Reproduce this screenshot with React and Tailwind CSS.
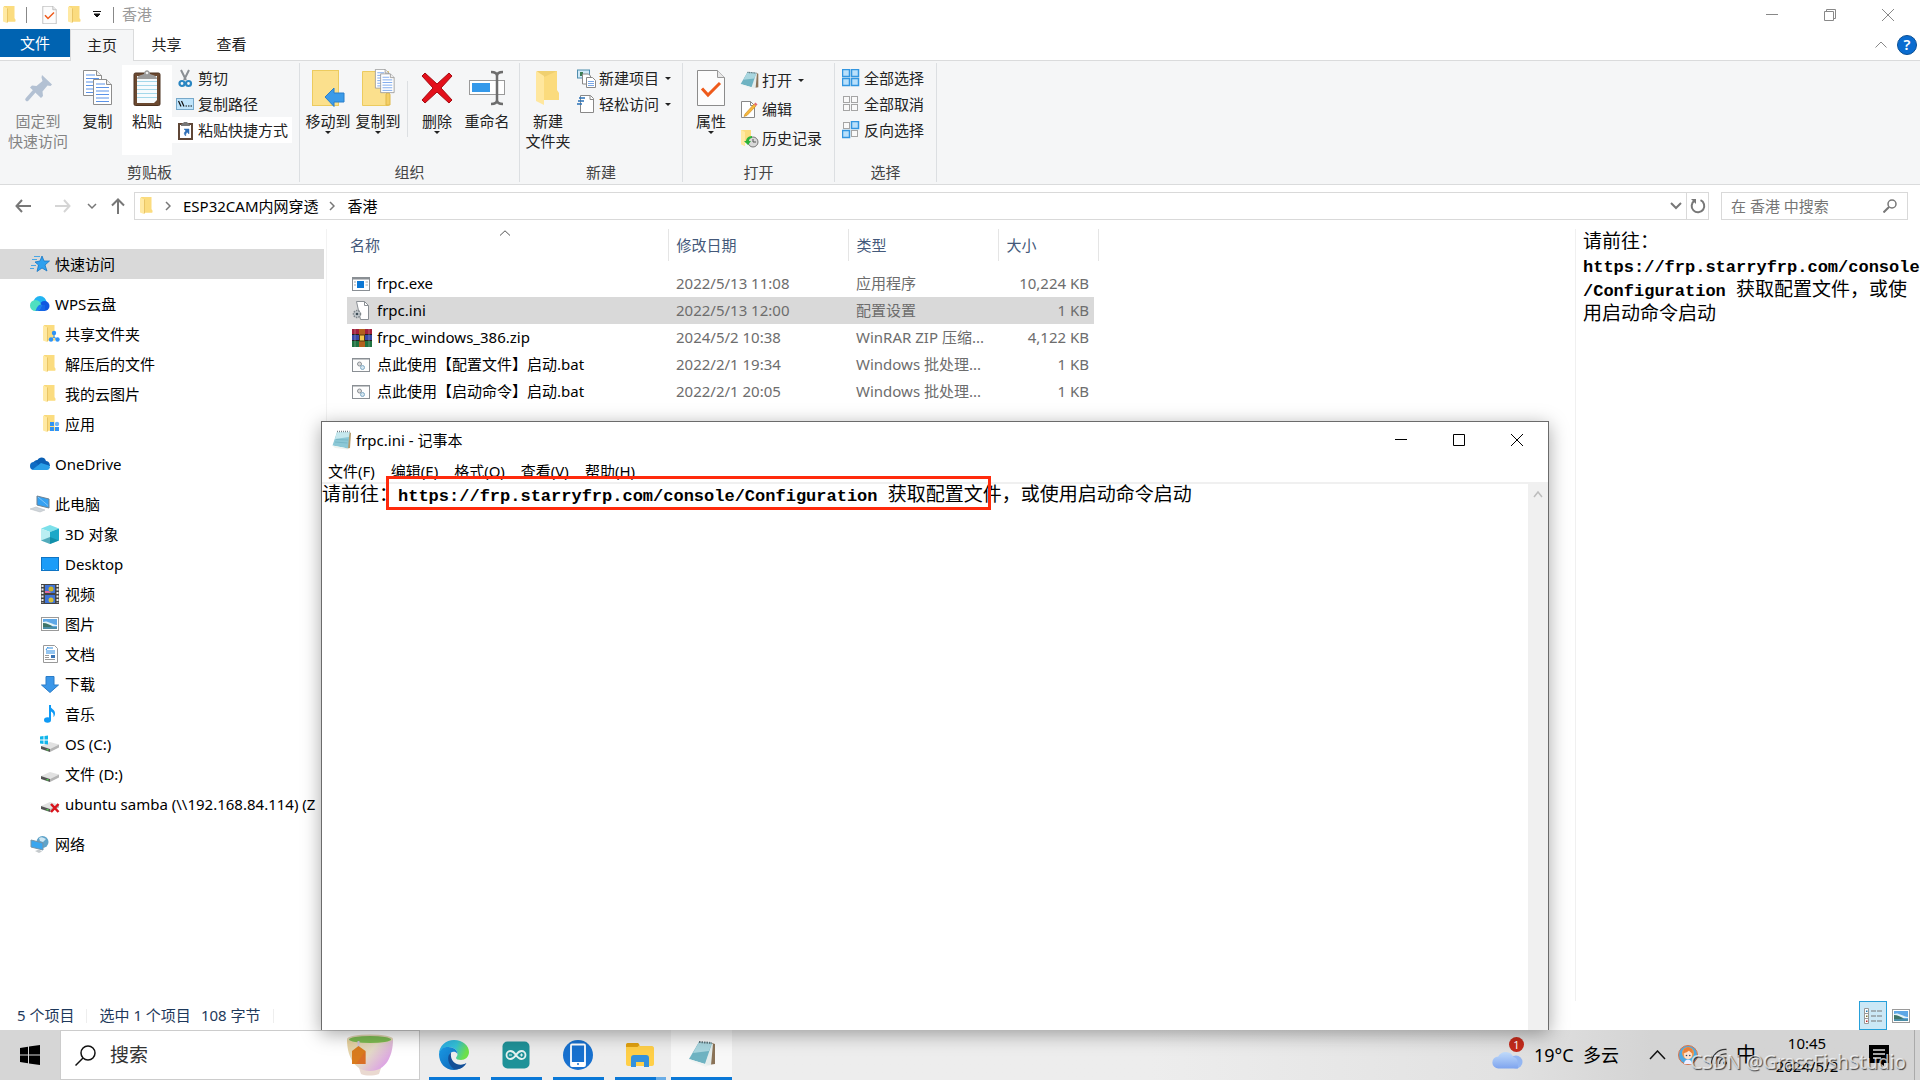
import React from "react";

/* ---------- icons ---------- */

function Svg({ w, h, vb, children, className = "" }) {
  return (
    <svg width={w} height={h} viewBox={vb || `0 0 ${w} ${h}`} className={`shrink-0 ${className}`} fill="none" aria-hidden="true">
      {children}
    </svg>
  );
}

const FolderShape = () => (
  <>
    <path d="M1 0h10v12l1 1.500v2H4z" fill="#f9d978" />
    <path d="M4 0h7.500v12.500l1 1v2H4.500z" fill="#fbdc7f" />
    <path d="M0 0.500L4 2v15L0 15.500z" fill="#ffe9a3" />
    <path d="M4 2v15l1-1V3z" fill="#e9c566" />
  </>
);
const Folder = () => (
  <Svg w={13} h={18}><FolderShape /></Svg>
);
const FolderNav = ({ badge }) => (
  <Svg w={20} h={20}>
    <g transform="translate(3 1)"><FolderShape /></g>
    {badge === "share" && (
      <g fill="#2f93f5"><circle cx="14" cy="9" r="2.200" /><circle cx="11" cy="15.500" r="2.200" /><circle cx="17.500" cy="15.500" r="2.200" /><path d="M14 9v4M14 13l-3 2.500M14 13l3.500 2.500" stroke="#2f93f5" /></g>
    )}
    {badge === "apps" && (
      <g fill="#2f93f5"><rect x="10" y="8" width="4" height="4" /><circle cx="17" cy="10" r="2.200" fill="#6fb6f8" /><rect x="10" y="13" width="4" height="4" /><rect x="15" y="13" width="4" height="4" /></g>
    )}
  </Svg>
);
const CheckDoc = ({ w, h }) => (
  <Svg w={w} h={h} vb="0 0 28 36">
    <path d="M.5.5h20l7 7v28H.5z" fill="#fcfcfc" stroke="#8c8c8c" />
    <path d="M20.500.5v7h7" fill="#e8e8e8" stroke="#9a9a9a" />
    <path d="M5 18.500l6 6.500L23 13" stroke="#ee5a1b" strokeWidth="3" />
  </Svg>
);
const Caret = () => (
  <Svg w={6} h={3}><path d="M0 0h6L3 3z" fill="#222" /></Svg>
);
const Pin = () => (
  <Svg w={36} h={36}>
    <path d="M22 5l10 9.500-1.500 1.500-3-.5-5 6 .5 4.500-2 2-11-10.500 2-2 4.500.5 6-5-1-3.500z" fill="#b3c1d3" />
    <path d="M14 21.500L7 29.500" stroke="#b3c1d3" strokeWidth="3.500" strokeLinecap="round" />
  </Svg>
);
const Page = ({ x, y }) => (
  <g transform={`translate(${x} ${y})`}>
    <path d="M.5.5h13l5 5v20H.5z" fill="#fff" stroke="#8d8d8d" />
    <path d="M13.500.5v5h5" fill="#eee" stroke="#8d8d8d" />
    <path d="M3 5h9M3 8.500h13M3 12h13M3 15.500h13M3 19h13M3 22.500h13" stroke="#5b93e8" />
  </g>
);
const Copy = () => (
  <Svg w={32} h={36}><Page x={1} y={0} /><Page x={11} y={9} /></Svg>
);
const Paste = () => (
  <Svg w={28} h={36}>
    <rect x="1" y="3" width="26" height="32.500" rx="1.500" fill="#6b4930" stroke="#4d3220" />
    <path d="M4 6h20v24l-3 3H4z" fill="#f7fbfd" />
    <path d="M4 11.500h20M4 15.500h20M4 19.500h20M4 23.500h20M4 27.500h20" stroke="#a4d8ea" />
    <path d="M4 9c0-4 5-4 7-5 0-5 6-5 6 0 2 1 7 1 7 5z" fill="#9b9b9b" /><circle cx="14" cy="3" r="1.300" fill="#eee" />
  </Svg>
);
const Cut = () => (
  <Svg w={18} h={19}>
    <path d="M5 1l5 10M13 1L8 11" stroke="#8a8f94" strokeWidth="2" />
    <circle cx="6" cy="14.500" r="2.500" stroke="#2a86c2" strokeWidth="2.200" /><circle cx="12.500" cy="14.500" r="2.500" stroke="#2a86c2" strokeWidth="2.200" />
  </Svg>
);
const CopyPath = () => (
  <Svg w={18} h={12}>
    <rect x=".5" y=".5" width="17" height="11" fill="#bfe4fb" stroke="#77a8c9" />
    <path d="M2.500 3l2.500 5.500M5.500 3L8 8.500M9.500 8h1.500M12 8h1.500M14.500 8H16" stroke="#111" strokeWidth="1.200" />
  </Svg>
);
const PasteLink = () => (
  <Svg w={18} h={19}>
    <rect x="3" y="3" width="13" height="15" fill="#fff" stroke="#5f4636" strokeWidth="2" />
    <path d="M5 5c0-3 2-2 3-4h3c1 2 3 1 3 4z" fill="#777" />
    <path d="M8 8h5v5l-1.700-1.700c-1.600 1-1.600 2-1.600 3.700-2.200-2-1.500-4.200.300-5z" fill="#2d6db5" stroke="#2d6db5" strokeWidth=".5" />
  </Svg>
);
const MoveTo = () => (
  <Svg w={34} h={38}>
    <rect x="1.500" y="1.500" width="26" height="35" fill="#fbe08d" stroke="#eccb5f" />
    <path d="M14 28l9-9v5h10v9H23v4.500z" fill="#3b9be9" stroke="#2b7fca" />
  </Svg>
);
const CopyTo = () => (
  <Svg w={34} h={38}>
    <path d="M1.500 2.500h26v34h-26z" fill="#fbe08d" stroke="#eccb5f" />
    <path d="M25 36V26c0-3 4-3 4 0v10z" fill="#f4cf67" stroke="#dfb84a" />
    <g transform="translate(14 0) scale(.75)"><Page x={0} y={0} /><Page x={7} y={6} /></g>
  </Svg>
);
const Delete = () => (
  <Svg w={32} h={34}>
    <path d="M4 2L16 13 28 2l3 3L20 17l11 12-3 3L16 21 4 32l-3-3L12 17 1 5z" fill="#e3101b" stroke="#a50c12" />
  </Svg>
);
const Rename = () => (
  <Svg w={36} h={36}>
    <rect x=".5" y="10.500" width="35" height="14" fill="#fff" stroke="#9a9a9a" />
    <rect x="3" y="13" width="18" height="9" fill="#3499ea" />
    <path d="M22 2c4 0 6 1 6 4v24c0 3-2 4-6 4M34 2c-4 0-6 1-6 4v24c0 3 2 4 6 4" stroke="#6d6d6d" strokeWidth="2.500" />
  </Svg>
);
const NewFolder = () => (
  <Svg w={26} h={36}>
    <path d="M2 1h20v19l2 3v7H8z" fill="#fbdb7d" /><path d="M2 1h20L9 7z" fill="#e9c868" opacity=".6" />
    <path d="M1 1l8 5v29l-8-4z" fill="#ffe79e" />
  </Svg>
);
const NewItem = () => (
  <Svg w={19} h={19}>
    <rect x=".5" y="1" width="12" height="8" fill="#cfe9f7" stroke="#4f8dae" /><rect x="3" y="3" width="3" height="4" fill="#3c7d56" />
    <path d="M5.500 5h6l2 2v8h-8z" fill="#fff" stroke="#888" />
    <path d="M9.500 8.500h6l3 3v7h-9z" fill="#fff" stroke="#888" /><path d="M11 12.500h6M11 14.500h6M11 16.500h6" stroke="#79a7e6" />
  </Svg>
);
const EasyAccess = () => (
  <Svg w={19} h={20}>
    <path d="M3.500 1.500h10l3 3v14h-13z" fill="#fff" stroke="#888" /><path d="M13 1.500v4h4" stroke="#888" />
    <path d="M2 4h6M1 7h6M0 10h5" stroke="#2a71b8" strokeWidth="1.500" />
  </Svg>
);
const NotepadIcon = ({ size = 20 }) => (
  <Svg w={size} h={size} vb="0 0 20 20">
    <path d="M17 2l2 1-1 15-5 1z" fill="#b59a6b" />
    <path d="M5 2h12.500l-1.500 16.500L.5 15.500z" fill="#8cc8d6" />
    <path d="M5 2h12.500l-.6 5L3 9z" fill="#c6e8ee" />
    <path d="M.5 15.500L16 18.500l-.3 1L3 18z" fill="#eef3f0" />
    <path d="M5 1.500h12.500" stroke="#75838a" strokeWidth="1.500" strokeDasharray="1 1" />
    <path d="M4 9.500l12 .5M3 12l12.500 1" stroke="#6fb0c0" opacity=".7" />
  </Svg>
);
const NotepadTilt = ({ size = 19 }) => (
  <Svg w={size} h={size} vb="0 0 28 28">
    <path d="M24 3l3 1v20l-7 1z" fill="#8b7357" />
    <path d="M23 3l2 1-2 21-6 1z" fill="#e4eceb" />
    <path d="M11 2l13 1-7 21L1 19z" fill="#6fb3c2" />
    <path d="M11 2l13 1-3 8L5 13z" fill="#a9d6df" />
    <path d="M1 19l16 5 3 1-2 2L3 21z" fill="#eff3f2" />
    <path d="M11 2l13 1" stroke="#60757b" strokeWidth="2" strokeDasharray="1.500 1" />
  </Svg>
);
const EditIcon = () => (
  <Svg w={18} h={19}>
    <path d="M1.500 1.500h9l4 4v12h-13z" fill="#fff" stroke="#888" /><path d="M10.500 1.500v4h4" stroke="#888" />
    <path d="M5 14L14 4l2 2-9 9.500-3 1z" fill="#f6b73c" stroke="#c98a1e" strokeWidth=".6" /><path d="M14 4l1.500-1.500 2 2L16 6z" fill="#e36a72" />
  </Svg>
);
const History = () => (
  <Svg w={19} h={19}>
    <path d="M1 1h10v13H5v3l-4-2z" fill="#fbdc7f" /><path d="M1 1l4 2v14l-4-2z" fill="#ffe9a3" />
    <circle cx="13" cy="13" r="5" fill="#d8d8d8" stroke="#777" /><path d="M13 10v3h3" stroke="#555" />
    <path d="M12 7c-4 0-6 3-6 5H4l4 4 3-4H9c0-2 1-3 3-3z" fill="#2bb23a" />
  </Svg>
);
const SelBox = ({ x, y, on }) => (
  <rect x={x + 0.5} y={y + 0.5} width={on ? 7 : 6} height={on ? 7 : 6} fill={on ? "#b9e0fb" : "#f9f9f9"} stroke={on ? "#3396e0" : "#a5a5a5"} strokeWidth={on ? 1.5 : 1} />
);
const SelectIcon = ({ on }) => (
  <Svg w={18} h={18}>
    <SelBox x={on[0] ? 0 : 1} y={on[0] ? 0 : 1} on={on[0]} /><SelBox x={9} y={on[1] ? 0 : 1} on={on[1]} /><SelBox x={on[2] ? 0 : 1} y={9} on={on[2]} /><SelBox x={9} y={9} on={on[3]} />
  </Svg>
);
const Star = () => (
  <Svg w={20} h={18}>
    <path d="M12 1l2 5h5.500L15 10l2 6-5-3-5 3.500L8.500 10 5 7l5-1z" fill="#2ea0ee" stroke="#1876c4" strokeWidth=".8" />
    <path d="M4 1.500h6M2 4.500h5M1 10.500h5M0 13.500h4" stroke="#4aa6e4" />
  </Svg>
);
const WpsCloud = () => (
  <Svg w={20} h={16}>
    <circle cx="10" cy="6.500" r="6.500" fill="#22b4f2" /><circle cx="14.500" cy="10" r="5" fill="#1158e0" /><rect x="6" y="9" width="9" height="6" fill="#1566e6" />
    <circle cx="5.500" cy="9.500" r="5.500" fill="#4fe0c0" /><path d="M5.500 15c4 0 5.500-3 7-6-3-1-5 0-7 6z" fill="#1c80ee" />
  </Svg>
);
const OneDrive = () => (
  <Svg w={20} h={14}>
    <path d="M3 7c0-3 3-4 4.500-4C9-.5 15-.5 16 4c3 0 4 3 4 5l-8 3z" fill="#0a5fb4" />
    <circle cx="4" cy="9" r="4" fill="#0f6cc4" /><path d="M2 13L11 6l8 2.500c2 2 0 4.500-2 4.500z" fill="#2a9fe8" />
  </Svg>
);
const Pc = () => (
  <Svg w={20} h={18}>
    <path d="M7 1l12 3v9L7 10z" fill="#35a1f2" stroke="#6e8191" /><path d="M8 2l10 8.500" stroke="#7fc4f8" />
    <path d="M0 14l6-2 9 3-5 2z" fill="#cfd5da" stroke="#b2b9be" strokeWidth=".5" />
  </Svg>
);
const Cube = () => (
  <Svg w={20} h={19}>
    <path d="M10 0l9 3.500-9 3.500-9-3.500z" fill="#7ce0ea" /><path d="M1 3.500L10 7v12l-9-3.500z" fill="#b9eef2" /><path d="M19 3.500L10 7v12l9-3.500z" fill="#1ba8c8" />
    <path d="M1 15.500l9-3.500 9 3.500-9 3.500z" fill="#0b7f96" opacity=".6" />
  </Svg>
);
const DesktopIcon = () => (
  <Svg w={20} h={14}><rect x="1.500" y=".5" width="17" height="13" fill="#1b9cf8" stroke="#0f74c4" /><path d="M3 12.500h14" stroke="#bfe2fb" strokeDasharray="1 12 1 1 1 1" /></Svg>
);
const Video = () => (
  <Svg w={20} h={20}>
    <rect x="1" y="0" width="18" height="20" fill="#444" /><path d="M2.500 1v18M17.500 1v18" stroke="#eee" strokeWidth="2" strokeDasharray="2 1.500" />
    <rect x="5" y="1" width="10" height="8" fill="#3f74d8" /><rect x="5" y="11" width="10" height="8" fill="#3f74d8" />
    <circle cx="11" cy="5" r="2.500" fill="#c9b22b" /><path d="M5 7h4l2 2H5z" fill="#e06aa0" /><circle cx="11" cy="16" r="2.500" fill="#d6bf38" />
  </Svg>
);
const Picture = () => (
  <Svg w={20} h={14}>
    <rect x="1.500" y=".5" width="17" height="13" fill="#fff" stroke="#9a9a9a" /><rect x="3" y="2" width="14" height="10" fill="#5ea7e6" />
    <path d="M3 5c4-2 8 2 14 3v1H3z" fill="#e3f2f8" /><path d="M3 6c4 0 7 2 10 3.500L3 11z" fill="#3e7469" /><path d="M3 10h14v2H3z" fill="#4b8ea8" />
  </Svg>
);
const DocIcon = () => (
  <Svg w={20} h={18}>
    <path d="M3.500.5h11l3 3v14h-14z" fill="#fff" stroke="#999" />
    <path d="M6 5l2-3M8 3h5M6 6h9M6 8h9" stroke="#2a8be0" /><path d="M5 10.500h4M5 12.500h4M5 14.500h10" stroke="#999" /><rect x="11" y="10" width="4" height="3" fill="#3b74b4" />
  </Svg>
);
const Download = () => (
  <Svg w={20} h={17}><path d="M6 .5h8V9h4.500L10 16.500 1.500 9H6z" fill="#3a96e8" stroke="#2a7cc8" /></Svg>
);
const Music = () => (
  <Svg w={20} h={18}><path d="M10 0v15" stroke="#0f9af5" strokeWidth="2" /><ellipse cx="7.500" cy="15" rx="3.500" ry="2.700" fill="#0f9af5" /><path d="M10 0c0 4 5.500 4 5 9-.2 1.500-1 3-1.500 3C14 9 13 7 10 6z" fill="#0f9af5" /></Svg>
);
const Drive = ({ badge }) => (
  <Svg w={20} h={18}>
    <path d="M1 11l9-4 9 2.500-9 4.500z" fill="#e2e2e2" /><path d="M1 11l9 3v3L1 14z" fill="#555" /><path d="M10 14l9-4.500v3L10 17z" fill="#b5b5b5" /><rect x="6.500" y="14" width="2" height="1.500" fill="#4ecb47" />
    {badge === "win" && <path d="M0 1.500l3.500-.5v3.500H0zM4.500 1L8 .5v4H4.500zM0 5.500h3.500V9L0 8.500zM4.500 5.500H8v4L4.500 9z" fill="#12b5ea" />}
    {badge === "off" && <path d="M11 9l7.500 8M18.500 9L11 17" stroke="#d9141c" strokeWidth="2.500" />}
  </Svg>
);
const NetworkIcon = () => (
  <Svg w={20} h={18}>
    <circle cx="12.500" cy="7" r="6" fill="#5fa3c9" /><path d="M9 3c3-2 5 0 7 1l-3 3-3-1z" fill="#cfe7f3" />
    <path d="M1 5l12 3v7L1 12z" fill="#3aa6ef" stroke="#7693a6" /><path d="M5 16l4-1.500 3 2-3 1.500z" fill="#c4c9cc" />
  </Svg>
);
const ExeIcon = () => (
  <Svg w={18} h={14}><rect x=".5" y=".5" width="17" height="13" fill="#fff" stroke="#8a8f94" /><path d="M0 1.500h18" stroke="#8a8f94" strokeWidth="2" /><rect x="5" y="4" width="7" height="7" fill="#0d78d4" /><path d="M2 5h2M2 8h2M13.500 5H16M13.500 8H16" stroke="#aaa" /></Svg>
);
const IniIcon = () => (
  <Svg w={18} h={19}><path d="M4.500.5h8l4 4v14h-8z" fill="#fff" stroke="#8a8f94" /><path d="M12.500.5v4h4" stroke="#8a8f94" /><circle cx="5" cy="13" r="3.500" fill="#c3c9cd" stroke="#7f868b" strokeDasharray="1.500 1" strokeWidth="1.500" /><circle cx="5" cy="13" r="1.300" fill="#3e4d57" /></Svg>
);
const ZipIcon = () => (
  <Svg w={20} h={18}>
    <rect width="20" height="6" fill="#a3203c" /><rect y="6" width="20" height="6" fill="#3948a8" /><rect y="12" width="20" height="6" fill="#1f7340" />
    <path d="M0 5.500h20M0 11.500h20" stroke="#222" /><rect x="7" width="6" height="18" fill="#b4611e" /><rect x="7.500" y="6" width="5" height="6" fill="#f2c94c" stroke="#5a3a10" /><path d="M3 0v18M17 0v18" stroke="#ddd" opacity=".35" />
  </Svg>
);
const BatIcon = () => (
  <Svg w={18} h={14}><rect x=".5" y=".5" width="17" height="13" fill="#fdfdfd" stroke="#8a8f94" /><path d="M0 1h18" stroke="#8a8f94" /><circle cx="7.500" cy="6" r="2" fill="#ddd" stroke="#8c9297" /><circle cx="10.500" cy="9.500" r="2" fill="#d5e6f0" stroke="#7fa9c4" /></Svg>
);
const Stroke = ({ w, h, d, color = "#777", sw = 1.5 }) => (
  <Svg w={w} h={h}><path d={d} stroke={color} strokeWidth={sw} /></Svg>
);

/* ---------- ribbon ---------- */

function BigButton({ icon, lines, caret, disabled, className = "w-[50px]" }) {
  return (
    <button className={`flex h-[90px] shrink-0 flex-col items-center text-[15px] leading-5 whitespace-nowrap ${disabled ? "text-[#838383]" : "text-[#222]"} ${className}`}>
      <span className="flex h-[46px] items-center justify-center">{icon}</span>
      {lines.map((l) => <span key={l}>{l}</span>)}
      {caret && <Caret />}
    </button>
  );
}

function SmallButton({ icon, label, caret, className = "" }) {
  return (
    <button className={`flex h-[26px] items-center pl-1 text-[15px] whitespace-nowrap text-[#222] ${className}`}>
      <span className="flex w-[22px] items-center">{icon}</span>
      <span>{label}</span>
      {caret && <span className="ml-[6px]"><Caret /></span>}
    </button>
  );
}

function Group({ title, className, children }) {
  return (
    <section aria-label={title} className={`my-[2px] flex flex-col justify-between border-r border-[#dcdfe2] ${className}`}>
      <div className="flex pt-[2px] pl-[3px]">{children}</div>
      <div className="text-center text-[15px] leading-5 text-[#444]">{title}</div>
    </section>
  );
}

function Ribbon() {
  return (
    <div className="flex h-[125px] shrink-0 border-y border-[#dadbdc] bg-[#f5f6f7]">
      <Group title="剪贴板" className="w-[300px]">
        <BigButton icon={<Pin />} lines={["固定到", "快速访问"]} disabled className="w-[70px]" />
        <BigButton icon={<Copy />} lines={["复制"]} className="w-[49px]" />
        <BigButton icon={<Paste />} lines={["粘贴"]} className="w-[50px] bg-white" />
        <div className="flex w-[120px] flex-col">
          <SmallButton icon={<Cut />} label="剪切" />
          <SmallButton icon={<CopyPath />} label="复制路径" />
          <SmallButton icon={<PasteLink />} label="粘贴快捷方式" className="bg-white" />
        </div>
      </Group>
      <Group title="组织" className="w-[220px]">
        <BigButton icon={<MoveTo />} lines={["移动到"]} caret />
        <BigButton icon={<CopyTo />} lines={["复制到"]} caret />
        <div className="mx-1 mt-4 h-[56px] w-px bg-[#dcdfe2]" />
        <BigButton icon={<Delete />} lines={["删除"]} caret />
        <BigButton icon={<Rename />} lines={["重命名"]} />
      </Group>
      <Group title="新建" className="w-[163px]">
        <BigButton icon={<NewFolder />} lines={["新建", "文件夹"]} />
        <div className="flex flex-col">
          <SmallButton icon={<NewItem />} label="新建项目" caret />
          <SmallButton icon={<EasyAccess />} label="轻松访问" caret />
        </div>
      </Group>
      <Group title="打开" className="w-[152px]">
        <BigButton icon={<CheckDoc w={28} h={36} />} lines={["属性"]} caret />
        <div className="flex flex-col gap-[3px] pt-[2px]">
          <SmallButton icon={<NotepadTilt />} label="打开" caret />
          <SmallButton icon={<EditIcon />} label="编辑" />
          <SmallButton icon={<History />} label="历史记录" />
        </div>
      </Group>
      <Group title="选择" className="w-[102px]">
        <div className="flex flex-col">
          <SmallButton icon={<SelectIcon on={[1, 1, 1, 1]} />} label="全部选择" />
          <SmallButton icon={<SelectIcon on={[0, 0, 0, 0]} />} label="全部取消" />
          <SmallButton icon={<SelectIcon on={[0, 1, 1, 0]} />} label="反向选择" />
        </div>
      </Group>
    </div>
  );
}

/* ---------- explorer ---------- */

function TitleBar() {
  return (
    <header className="flex h-[29px] shrink-0 items-center pl-[3px]">
      <Folder />
      <span className="mx-[10px] h-4 w-px bg-[#888]" />
      <button aria-label="属性" className="ml-[5px]"><CheckDoc w={15} h={18} /></button>
      <button aria-label="新建文件夹" className="ml-[11px]"><Folder /></button>
      <button aria-label="自定义快速访问工具栏" className="ml-3">
        <Svg w={8} h={7}><path d="M0 .5h8M1 3h6L4 6z" stroke="#111" strokeWidth="1" fill="#111" /></Svg>
      </button>
      <span className="mx-3 h-4 w-px bg-[#888]" />
      <h1 className="-ml-1 text-[15px] text-[#999]">香港</h1>
      <div className="ml-auto flex pr-[3px]">
        <button aria-label="最小化" className="flex w-[58px] justify-center"><Stroke w={12} h={12} d="M0 5.500h12" sw={1} color="#888" /></button>
        <button aria-label="还原" className="flex w-[58px] justify-center"><Stroke w={12} h={12} d="M.5 2.500h9v9h-9zM2.500 2.500v-2h9v9h-2" sw={1} color="#888" /></button>
        <button aria-label="关闭" className="flex w-[58px] justify-center"><Stroke w={12} h={12} d="M0 0l12 12M12 0L0 12" sw={1} color="#888" /></button>
      </div>
    </header>
  );
}

function Tabs() {
  return (
    <nav className="flex h-[31px] shrink-0 text-[15px] text-[#222]">
      <button className="mb-[3px] w-[70px] bg-[#0063b1] text-white">文件</button>
      <button className="relative z-10 -mb-px w-16 border border-b-0 border-[#dadbdc] bg-[#f5f6f7]">主页</button>
      <button className="w-[65px]">共享</button>
      <button className="w-[65px]">查看</button>
      <div className="ml-auto flex items-center gap-[10px] pr-[3px]">
        <button aria-label="最小化功能区"><Stroke w={12} h={7} d="M.5 6.500L6 1l5.500 5.500" sw={1} color="#888" /></button>
        <button aria-label="帮助" className="flex size-5 items-center justify-center rounded-full border border-[#0a4f94] bg-[#0a6cd0] text-[15px] leading-none font-semibold text-white">?</button>
      </div>
    </nav>
  );
}

function AddressBar() {
  return (
    <div className="mt-[7px] flex h-7 shrink-0 items-center pr-3">
      <button aria-label="后退" className="ml-[15px]"><Stroke w={16} h={14} d="M7 1L1.500 7 7 13M1.500 7H16" sw={2} /></button>
      <button aria-label="前进" className="ml-6"><Stroke w={16} h={14} d="M9 1l5.500 6L9 13M14.500 7H0" color="#d5d5d5" sw={2} /></button>
      <button aria-label="最近浏览的位置" className="ml-4"><Stroke w={10} h={7} d="M1 1l4 4 4-4" /></button>
      <button aria-label="上移" className="ml-[14px]"><Stroke w={14} h={16} d="M1 7.500L7 1.500l6 6M7 1.500V16" sw={2} /></button>
      <div className="ml-[9px] flex h-full flex-1 items-center border border-[#d9d9d9] pl-[5px] text-[15px] text-black">
        <Folder />
        <span className="mx-3"><Stroke w={6} h={10} d="M1 1l4 4-4 4" /></span>
        <a href="#parent">ESP32CAM内网穿透</a>
        <span className="mr-3 ml-[11px]"><Stroke w={6} h={10} d="M1 1l4 4-4 4" /></span>
        <a href="#here">香港</a>
        <button aria-label="以前的位置" className="mr-1 ml-auto"><Stroke w={12} h={8} d="M1 1l5 5 5-5" sw={2} /></button>
        <button aria-label="刷新" className="flex h-full w-[22px] items-center justify-center border-l border-[#d9d9d9]">
          <Svg w={16} h={16}><path d="M10.500 2.200A6.300 6.300 0 1 1 4.500 2.700" stroke="#777" strokeWidth="2" /><path d="M1 1h5v5z" fill="#777" /></Svg>
        </button>
      </div>
      <label className="ml-3 flex h-full w-[187px] items-center border border-[#d9d9d9] pr-[10px] pl-[9px]">
        <input aria-label="搜索" placeholder="在 香港 中搜索" className="min-w-0 flex-1 text-[15px] outline-none placeholder:text-[#757575]" />
        <Svg w={14} h={14}><circle cx="9" cy="5" r="4" stroke="#777" strokeWidth="1.500" /><path d="M6 8L.5 13.500" stroke="#777" strokeWidth="2" /></Svg>
      </label>
    </div>
  );
}

const navGroups = [
  [{ icon: <Star />, label: "快速访问", root: true, active: true }],
  [
    { icon: <WpsCloud />, label: "WPS云盘", root: true },
    { icon: <FolderNav badge="share" />, label: "共享文件夹" },
    { icon: <FolderNav />, label: "解压后的文件" },
    { icon: <FolderNav />, label: "我的云图片" },
    { icon: <FolderNav badge="apps" />, label: "应用" },
  ],
  [{ icon: <OneDrive />, label: "OneDrive", root: true }],
  [
    { icon: <Pc />, label: "此电脑", root: true },
    { icon: <Cube />, label: "3D 对象" },
    { icon: <DesktopIcon />, label: "Desktop" },
    { icon: <Video />, label: "视频" },
    { icon: <Picture />, label: "图片" },
    { icon: <DocIcon />, label: "文档" },
    { icon: <Download />, label: "下载" },
    { icon: <Music />, label: "音乐" },
    { icon: <Drive badge="win" />, label: "OS (C:)" },
    { icon: <Drive />, label: "文件 (D:)" },
    { icon: <Drive badge="off" />, label: "ubuntu samba (\\\\192.168.84.114) (Z" },
  ],
  [{ icon: <NetworkIcon />, label: "网络", root: true }],
];

function NavPane() {
  return (
    <aside className="flex w-[327px] shrink-0 flex-col gap-[10px] overflow-hidden border-r border-[#f2f2f2] pt-5 pr-[2px]">
      {navGroups.map((g, i) => (
        <ul key={i}>
          {g.map((n) => (
            <li key={n.label}>
              <a href="#nav" className={`flex h-[30px] items-center gap-[5px] text-[15px] whitespace-nowrap text-black ${n.root ? "pl-[30px]" : "pl-10"} ${n.active ? "bg-[#d9d9d9]" : ""}`}>
                {n.icon}
                <span>{n.label}</span>
              </a>
            </li>
          ))}
        </ul>
      ))}
    </aside>
  );
}

const files = [
  [<ExeIcon />, "frpc.exe", "2022/5/13 11:08", "应用程序", "10,224 KB"],
  [<IniIcon />, "frpc.ini", "2022/5/13 12:00", "配置设置", "1 KB"],
  [<ZipIcon />, "frpc_windows_386.zip", "2024/5/2 10:38", "WinRAR ZIP 压缩...", "4,122 KB"],
  [<BatIcon />, "点此使用【配置文件】启动.bat", "2022/2/1 19:34", "Windows 批处理...", "1 KB"],
  [<BatIcon />, "点此使用【启动命令】启动.bat", "2022/2/1 20:05", "Windows 批处理...", "1 KB"],
];

function FileList() {
  return (
    <div className="min-w-0 flex-1 overflow-hidden pl-5">
      <table className="w-[752px] table-fixed border-collapse text-[15px] whitespace-nowrap">
        <colgroup>
          <col className="w-[321px]" /><col className="w-[180px]" /><col className="w-[150px]" /><col className="w-[96px]" /><col />
        </colgroup>
        <thead>
          <tr className="h-8 text-left text-[#44597a]">
            <th className="relative border-r border-[#e5e5e5] pl-[3px] font-normal">
              名称
              <span className="absolute top-[1px] left-[152px]"><Stroke w={12} h={6} d="M1 5.500L6 .8l5 4.700" sw={1} color="#555" /></span>
            </th>
            <th className="border-r border-[#e5e5e5] pl-2 font-normal">修改日期</th>
            <th className="border-r border-[#e5e5e5] pl-2 font-normal">类型</th>
            <th className="pl-2 font-normal">大小</th>
            <th aria-hidden="true" className="border-r border-[#e5e5e5]" />
          </tr>
        </thead>
        <tbody>
          <tr className="h-[9px]"><td colSpan={5} /></tr>
          {files.map(([icon, name, date, type, size], i) => (
            <tr key={name} className={`h-[27px] text-[#6d6d6d] ${i === 1 ? "[&>td:not(:last-child)]:bg-[#d9d9d9]" : ""}`}>
              <td className="pl-[5px] text-black">
                <span className="flex items-center"><span className="flex w-[25px]">{icon}</span>{name}</span>
              </td>
              <td className="pl-2">{date}</td>
              <td className="pl-2">{type}</td>
              <td className="pr-[5px] text-right">{size}</td>
              <td />
            </tr>
          ))}
        </tbody>
      </table>
    </div>
  );
}

const Latin = ({ children }) => (
  <span className="font-['Liberation_Mono',monospace] text-[17px] leading-none font-bold">{children}</span>
);

function Preview() {
  return (
    <section aria-label="预览" className="w-[345px] shrink-0 border-l border-[#f0f0f0] pl-[7px] text-[19px] leading-6 break-all text-black">
      <p>请前往：</p>
      <p><Latin>https://frp.starryfrp.com/console</Latin></p>
      <p><Latin>/Configuration </Latin>获取配置文件，或使用启动命令启动</p>
    </section>
  );
}

function StatusBar() {
  return (
    <footer className="flex h-[29px] shrink-0 items-center pl-[17px] text-[15px] whitespace-nowrap text-[#1e395b]">
      <span>5 个项目</span>
      <span className="mx-3 h-[14px] w-px bg-[#eee]" />
      <span>选中 1 个项目</span>
      <span className="ml-[10px]">108 字节</span>
      <span className="mx-3 h-[14px] w-px bg-[#eee]" />
      <div className="ml-auto flex items-center gap-1 pr-[9px]">
        <button aria-label="详细信息" className="flex h-[29px] w-7 items-center justify-center border border-[#26a0da] bg-[#cbe8f6]">
          <Svg w={18} h={16}><path d="M.5.5h4v15h-4zM.5 5.500h4M.5 10.500h4" fill="#fff" stroke="#999" /><path d="M7 3h5M13 3h5M7 8h5M13 8h5M7 13h5M13 13h5" stroke="#777" /><rect x="2" y="2.500" width="1.500" height="1.500" fill="#27a" /><rect x="2" y="7.500" width="1.500" height="1.500" fill="#773" /><rect x="2" y="12.500" width="1.500" height="1.500" fill="#b22" /></Svg>
        </button>
        <button aria-label="大缩略图"><Picture /></button>
      </div>
    </footer>
  );
}

/* ---------- notepad ---------- */

function Notepad() {
  return (
    <div role="dialog" aria-label="frpc.ini - 记事本" className="absolute top-[421px] right-[371px] bottom-[50px] left-[321px] z-20 flex flex-col border border-b-0 border-[#6b6b6b] bg-white shadow-[0_4px_18px_rgba(0,0,0,0.35)]">
      <div className="flex h-9 shrink-0 items-center pl-[10px]">
        <NotepadIcon />
        <span className="ml-1 text-[15px] text-black">frpc.ini - 记事本</span>
        <div className="ml-auto flex pr-[2px]">
          <button aria-label="最小化" className="flex w-[58px] justify-center"><Stroke w={12} h={12} d="M0 5.500h12" sw={1} color="#000" /></button>
          <button aria-label="最大化" className="flex w-[58px] justify-center"><Stroke w={12} h={12} d="M.5.5h11v11H.5z" sw={1} color="#000" /></button>
          <button aria-label="关闭" className="flex w-[58px] justify-center"><Stroke w={12} h={12} d="M0 0l12 12M12 0L0 12" sw={1} color="#000" /></button>
        </div>
      </div>
      <div className="flex h-[26px] shrink-0 gap-4 border-b-2 border-[#f0f0f0] pt-[2px] pl-[6px] text-[15px] text-black">
        {["文件(F)", "编辑(E)", "格式(O)", "查看(V)", "帮助(H)"].map((m) => <button key={m}>{m}</button>)}
      </div>
      <div className="flex min-h-0 flex-1">
        <div role="textbox" aria-label="文本编辑器" aria-multiline="true" contentEditable suppressContentEditableWarning className="flex-1 text-[19px] leading-5 whitespace-nowrap text-black outline-none">
          请前往：<Latin>https://frp.starryfrp.com/console/Configuration </Latin>获取配置文件，或使用启动命令启动
        </div>
        <div className="flex w-5 justify-center bg-[#f0f0f0] pt-[6px]">
          <Stroke w={10} h={8} d="M1 7l4-5 4 5" color="#bdbdbd" />
        </div>
      </div>
      <div className="pointer-events-none absolute top-[54px] left-16 h-[34px] w-[605px] border-[3px] border-[#ff2a0c]" />
    </div>
  );
}

/* ---------- taskbar ---------- */

const Edge = () => (
  <Svg w={30} h={30}>
    <defs>
      <linearGradient id="edgeTop" x1="0" y1="0" x2="1" y2=".3"><stop offset="0" stopColor="#28a8e8" /><stop offset=".6" stopColor="#35c3d8" /><stop offset="1" stopColor="#6ee04a" /></linearGradient>
      <linearGradient id="edgeMid" x1="0" y1="0" x2="1" y2="1"><stop offset="0" stopColor="#1a9be6" /><stop offset="1" stopColor="#0d5cae" /></linearGradient>
    </defs>
    <path d="M0 14C0 6 7 0 15 0c9 0 15 6 15 12 0 5-4 8-8 8-3 0-5-1-5-2 0-1 1.500-1.500 1.500-4 0-4-4-7-9-7C5 7 2 9 0 14z" fill="url(#edgeTop)" />
    <path d="M0 14c1-5 5-7.500 9.500-7 5 0 9 3 9 7-1-2-3-2.500-4.500-2.300C8 12.500 9 22 18 25c3 1 7 0 9-2-2 4-7 7-12 7C6 30 0 23 0 14z" fill="url(#edgeMid)" />
    <path d="M12 12.500C7 16 9 25 15 29c6 1 10-2 12.500-6-6 4-17 1-15.500-10.500z" fill="#134f97" />
  </Svg>
);
const Arduino = () => (
  <Svg w={28} h={28}>
    <rect x=".5" y=".5" width="27" height="27" rx="5" fill="#1f9298" />
    <path d="M14 14c-2-3-3.500-4-5.500-4a4 4 0 0 0 0 8c2 0 3.500-1 5.500-4s3.500-4 5.500-4a4 4 0 0 1 0 8c-2 0-3.500-1-5.500-4z" stroke="#e5f2f0" strokeWidth="1.800" />
    <path d="M7 14h3M18 14h3M19.500 12.500v3" stroke="#e5f2f0" strokeWidth="1" />
  </Svg>
);
const Phone = () => (
  <Svg w={30} h={30}><circle cx="15" cy="15" r="15" fill="#1871cf" /><rect x="8" y="4.500" width="14" height="21.500" rx="1" fill="#1871cf" stroke="#fff" strokeWidth="1.800" /><path d="M8 22h14v4H8z" fill="#fff" /><circle cx="15" cy="24" r="1" fill="#1871cf" /></Svg>
);
const ExplorerIcon = () => (
  <Svg w={28} h={24}><path d="M0 2c0-1 .5-2 2-2h10l2 3h12c1 0 2 1 2 2v16c0 1-1 2-2 2H2c-1 0-2-1-2-2z" fill="#ffcf48" /><path d="M0 2c0-1 .5-2 2-2h10l1.500 2-2 2H0z" fill="#e0a010" /><path d="M5 24v-9c0-2 1-3 3-3h12c2 0 3 1 3 3v9h-5v-5h-8v5z" fill="#3391dc" /></Svg>
);
const Cup = () => (
  <Svg w={48} h={42}>
    <defs><linearGradient id="cup" x1="0" y1="0" x2="1" y2=".6"><stop offset="0" stopColor="#e6cf96" /><stop offset=".55" stopColor="#e3dac8" /><stop offset="1" stopColor="#dc9fe6" /></linearGradient></defs>
    <path d="M13 34h22l-2 6c-6 2-13 2-18 0z" fill="#ead9d0" />
    <path d="M1 5C1 22 8 37 24 37S47 22 47 5z" fill="url(#cup)" />
    <ellipse cx="24" cy="5" rx="23" ry="4.500" fill="#e3d6b4" />
    <ellipse cx="24" cy="5.500" rx="21" ry="3.500" fill="#7dbb52" />
    <path d="M12.500 7v8" stroke="#cfc3d8" strokeWidth="2" />
    <path d="M12.500 12l7 5v13H6V17z" fill="#d97b1d" /><path d="M19.500 17v13H10z" fill="#d8652e" opacity=".6" />
  </Svg>
);
const WeatherCloud = () => (
  <Svg w={32} h={20}>
    <defs><linearGradient id="cloud" x1="0" y1="0" x2="0" y2="1"><stop offset="0" stopColor="#c2dcfb" /><stop offset="1" stopColor="#7ea4ee" /></linearGradient></defs>
    <circle cx="24" cy="13" r="6.500" fill="#93b6f2" />
    <path d="M6.500 19.500a6 6 0 0 1-.3-12A8.500 8.500 0 0 1 21.500 8c4 1 5 5 4.500 11.500z" fill="url(#cloud)" />
  </Svg>
);
const Avatar = () => (
  <Svg w={20} h={20}>
    <circle cx="10" cy="10" r="9.500" fill="#4ea9e0" stroke="#dc7448" /><circle cx="10" cy="8" r="6" fill="#f09a4e" /><circle cx="10" cy="10" r="4" fill="#fde3cf" /><path d="M5 8c3 0 5-1 6-3 1 2 2 3 4 3l-1-4-4-2-4 2z" fill="#e8803a" /><path d="M6 19c0-6 8-6 8 0z" fill="#eef" /><circle cx="8.500" cy="10.500" r=".8" fill="#346" /><circle cx="11.800" cy="10.500" r=".8" fill="#346" />
  </Svg>
);

function TaskButton({ label, icon, bar }) {
  return (
    <button aria-label={label} className="flex h-full w-[62px] flex-col items-center">
      <span className="flex flex-1 items-center pt-[2px]">{icon}</span>
      {bar || <span className="h-[3px] w-[51px] bg-[#0a78d7]" />}
    </button>
  );
}

function Taskbar() {
  return (
    <footer className="relative flex h-[50px] shrink-0 bg-linear-to-r from-[#ededed] from-60% via-[#e2e2e2] via-78% to-[#d4d4d4] to-86% text-black">
      <button aria-label="开始" className="flex w-[60px] items-center justify-center bg-[#d6d6d6]">
        <Svg w={20} h={20}><path d="M0 3l8-1.200V9.500H0zM9 1.600L20 0v9.500H9zM0 10.500h8v7.700L0 17zM9 10.500h11V20L9 18.400z" fill="#000" /></Svg>
      </button>
      <label className="flex w-[360px] items-center border border-[#ccc] bg-white pr-[25px] pl-[14px]">
        <Svg w={21} h={21}><circle cx="13" cy="8" r="7" stroke="#111" strokeWidth="1.500" /><path d="M8 13L.5 20.500" stroke="#111" strokeWidth="1.500" /></Svg>
        <input aria-label="任务栏搜索" placeholder="搜索" className="ml-[14px] min-w-0 flex-1 text-[19px] outline-none placeholder:text-[#333]" />
        <Cup />
      </label>
      <div className="ml-[3px] flex">
        <TaskButton label="Microsoft Edge" icon={<Edge />} />
        <TaskButton label="Arduino" icon={<Arduino />} />
        <TaskButton label="手机助手" icon={<Phone />} />
        <TaskButton label="文件资源管理器" icon={<ExplorerIcon />} bar={<span className="flex h-[3px] w-[51px] bg-[#6aade6]"><span className="w-[41px] bg-[#0a78d7]" /></span>} />
        <button aria-label="记事本" className="flex h-full w-[61px] flex-col items-center bg-[#f8f8f8]">
          <span className="flex flex-1 items-center"><NotepadTilt size={28} /></span>
          <span className="h-[3px] w-full bg-[#0a78d7]" />
        </button>
      </div>
      <div className="ml-auto flex items-center">
        <button className="flex items-center gap-[10px] text-[18px] whitespace-nowrap">
          <span className="relative flex pt-2">
            <WeatherCloud />
            <span className="absolute -top-1 right-0 flex size-[15px] items-center justify-center rounded-full bg-[#c42b1c] text-[11px] leading-none text-white">1</span>
          </span>
          19°C&nbsp; 多云
        </button>
        <button aria-label="显示隐藏的图标" className="ml-[30px]"><Stroke w={17} h={10} d="M1 9l7.500-8L16 9" color="#111" /></button>
        <span className="ml-3"><Avatar /></span>
        <button aria-label="网络" className="ml-3 pt-1"><Svg w={18} h={18}><circle cx="15" cy="15" r="1.800" fill="#111" /><path d="M9.500 16a6 6 0 0 1 7-6M5.500 16a10 10 0 0 1 11-10M1.500 16A14 14 0 0 1 16.500 1.500" stroke="#333" strokeWidth="1.300" /></Svg></button>
        <button className="ml-2 text-[20px] leading-5">中</button>
        <div className="ml-[14px] w-[74px] text-center text-[15px] leading-[23px]"><div>10:45</div><div>2024/5/2</div></div>
        <button aria-label="通知" className="ml-[25px]">
          <Svg w={20} h={21}><path d="M0 0h20v18h-5v3l-4-3H0z" fill="#000" /><path d="M4 5h12M4 9h12M4 13h8" stroke="#ddd" strokeWidth="1.500" /></Svg>
        </button>
        <span className="mr-[5px] ml-[25px] h-[50px] w-px bg-[#aaa]" />
      </div>
      <span className="pointer-events-none absolute right-[14px] bottom-[6px] text-[19px] leading-6 text-white/70 [text-shadow:1px_1px_1px_rgba(0,0,0,0.7)]">CSDN @GrassFishStudio</span>
    </footer>
  );
}

export default function App() {
  return (
    <div className="relative flex h-screen flex-col overflow-hidden bg-white font-['Noto_Sans','Noto_Sans_CJK_SC',sans-serif]">
      <TitleBar />
      <Tabs />
      <Ribbon />
      <AddressBar />
      <main className="mt-[9px] flex min-h-0 flex-1">
        <NavPane />
        <FileList />
        <Preview />
      </main>
      <StatusBar />
      <Taskbar />
      <Notepad />
    </div>
  );
}
